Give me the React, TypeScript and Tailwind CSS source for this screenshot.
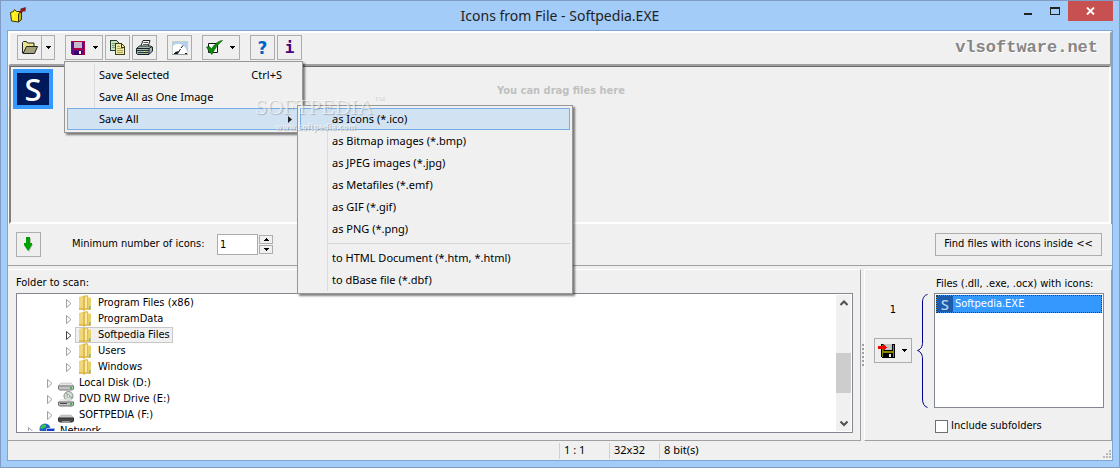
import React, { useState } from "react";

const UI = "font-['Noto_Sans','Open_Sans',sans-serif]";
const TAHOMA = "font-['DejaVu_Sans_Condensed','Noto_Sans',sans-serif]";

type ToolProps = {
  label: string;
  wide?: boolean;
  split?: boolean;
  children: React.ReactNode;
};

function Caret() {
  return (
    <svg width="5" height="3" viewBox="0 0 5 3" shapeRendering="crispEdges">
      <path d="M0 0h5v1H0zM1 1h3v1H1zM2 2h1v1H2z" fill="#000" />
    </svg>
  );
}

function Tool({ label, wide, split, children }: ToolProps) {
  return (
    <button
      type="button"
      aria-label={label}
      className={
        "flex h-[25px] shrink-0 items-center border border-[#adadad] bg-[#efefef] " +
        (wide ? "w-[38px]" : "w-[25px]")
      }
    >
      <span className="flex w-[23px] items-center justify-center">{children}</span>
      {wide && (
        <span
          className={
            "flex h-full flex-1 items-center justify-center " +
            (split ? "border-l border-[#adadad]" : "")
          }
        >
          <Caret />
        </span>
      )}
    </button>
  );
}

function OpenIcon() {
  return (
    <svg width="16" height="13" viewBox="0 0 16 13">
      <path d="M.5 12V1.500l1-1h3l1 1.500h6.500v3" fill="#e9e58a" stroke="#222" />
      <path d="M1 12.500L4.500 5.500h11l-3 7z" fill="#a3a07c" stroke="#222" />
    </svg>
  );
}

function SaveIcon() {
  return (
    <svg width="14" height="14" viewBox="0 0 14 14" shapeRendering="crispEdges">
      <path d="M0 0h14v14H1L0 13z" fill="#b00038" />
      <path d="M1 1h2v7h8V1h2v12H1z" fill="#5c0a96" />
      <path d="M2 8h10v1H2z" fill="#b00038" />
      <path d="M3 1h8v6H3z" fill="#c3bcc8" />
      <path d="M3 10h8v4H3z" fill="#3a0070" />
      <path d="M8 10h2v3H8z" fill="#fff" />
    </svg>
  );
}

function CopyIcon() {
  return (
    <svg width="15" height="15" viewBox="0 0 15 15" shapeRendering="crispEdges">
      <path d="M.5.500h6l2 2v8h-8z" fill="#c9e3c0" stroke="#24402c" />
      <path d="M2 3h3v1H2zM2 5h3v1H2zM2 7h3v1H2z" fill="#7f9e80" />
      <path d="M5.500 3.500h6l3 3v8h-9z" fill="#f2eda6" stroke="#3c3c14" />
      <path d="M11.500 4v3H14" fill="none" stroke="#3c3c14" />
      <path d="M7 6h3v1H7zM7 8h6v1H7zM7 10h6v1H7zM7 12h6v1H7z" fill="#a9a25a" />
    </svg>
  );
}

function PrintIcon() {
  return (
    <svg width="17" height="15" viewBox="0 0 17 15">
      <path d="M4.500 7L7 .5h7L12 7z" fill="#fff" stroke="#222" />
      <path d="M7.500 2.500h4.500M7 4.500h5" stroke="#555" />
      <path d="M.5 8.500L3.500 6h11l2 1v4l-3.500 3.500H2l-1.500-1z" fill="#a9b6b6" stroke="#142020" />
      <path d="M1 8.500h12l3-2M13 8.500v5.500" fill="none" stroke="#142020" />
      <path d="M1 10.500h12M2 12.500h10" stroke="#27383a" />
      <path d="M7 11.500h3" stroke="#e2d820" />
    </svg>
  );
}

function GaugeIcon() {
  return (
    <svg width="16" height="14" viewBox="0 0 16 14">
      <path d="M0 0h16v14H0z" fill="#b4cff0" />
      <path d="M.5 14V.5h15V14" fill="none" stroke="#c4d2c4" />
      <path d="M1 14V5C5 1 13 2 15.500 12v2z" fill="#fff" />
      <path d="M5 13.500L8.500 8M9 7l2-2.500M2 12.500h3M13 12.500h2" stroke="#111" fill="none" />
      <path d="M3 11l4-1-3 4z" fill="#111" />
      <path d="M0 13.500h16" stroke="#8e9a9a" />
    </svg>
  );
}

function CheckIcon() {
  return (
    <svg width="17" height="15" viewBox="0 0 17 15">
      <path d="M2.500 3.500h9v9h-9z" fill="#fff" stroke="#111" />
      <path d="M.5 7l3-.5L5.500 9C8 4.500 12 1 16.500.5 12 4 9 8.500 6 14.500 4 13 2 10 .5 7z" fill="#0a8a0a" stroke="#045c04" strokeWidth=".6" />
    </svg>
  );
}

function AppIcon() {
  return (
    <svg width="16" height="16" viewBox="0 0 16 16">
      <path d="M.5 5.500l3-1 1-2 2 2h5v7.500l-3 3-7-1z" fill="#ffee1c" stroke="#3a3500" />
      <path d="M8.500 7l3-3v8.500l-3 2.500z" fill="#c8b400" stroke="#3a3500" />
      <path d="M3.500 7v5" stroke="#fffbb0" fill="none" />
      <path d="M9 5l2.500-2-1-1L15.500.5l-.5 4-1-1L11 6z" fill="#a01414" stroke="#3c0000" strokeWidth=".5" />
    </svg>
  );
}

function ExportIcon() {
  return (
    <svg width="17" height="15" viewBox="0 0 17 15" shapeRendering="crispEdges">
      <path d="M3 1h14v14H4l-1-1z" fill="#000" />
      <path d="M4 2h1v12H4zM15 2h1v12h-1zM5 8h10v2H5z" fill="#8a8a00" />
      <path d="M6 1h8v6H6z" fill="#c6c6c6" />
      <path d="M6 10h8v5H6z" fill="#000" />
      <path d="M11 11h2v3h-2z" fill="#f0f0f0" />
      <path d="M0 3h5V1h1v1h1v1h1v1h1v1H8v1H7v1H6v1H5V6H0z" fill="#f00000" />
    </svg>
  );
}

function DownArrowIcon() {
  return (
    <svg width="9" height="15" viewBox="0 0 9 15">
      <path d="M4 1h3v6h2L5 15 3 12z" fill="#b8b8b8" />
      <path d="M2 0h4v6h2v2L4 14 0 8V6h2z" fill="#00a000" />
    </svg>
  );
}

function FolderIcon() {
  return (
    <svg width="14" height="16" viewBox="0 0 14 16">
      <path d="M1 2l5-1.500v14L1 15z" fill="#f0d779" />
      <path d="M5 1l4-1 1 1v13l-5 2z" fill="#e2bd4c" />
      <path d="M7 2l2-.5V14l-2 1z" fill="#f9eaa8" />
      <path d="M10 2l3 1v11l-3 1z" fill="#ecd06a" />
      <path d="M1 13h12v2H1z" fill="#d7ad3c" opacity=".6" />
      <path d="M11 11h1.500v3H11z" fill="#55bfe0" />
    </svg>
  );
}

function DriveIcon({ dark }: { dark?: boolean }) {
  return (
    <svg width="16" height="16" viewBox="0 0 16 16">
      <path d="M3 8h10l3 3H0z" fill={dark ? "#c9c9c9" : "#e4e4e4"} stroke="#aaa" strokeWidth=".5" />
      <path d="M.5 11h15v3l-1 1h-13l-1-1z" fill={dark ? "#484848" : "#c4c4c4"} stroke={dark ? "#333" : "#777"} />
      {dark ? <path d="M4 14h8v2H4z" fill="#999" /> : <path d="M12 12h2v2h-2z" fill="#38c038" />}
    </svg>
  );
}

function DvdIcon() {
  return (
    <svg width="16" height="16" viewBox="0 0 16 16">
      <circle cx="10.500" cy="5" r="4.500" fill="#d5dbd5" stroke="#8b8b8b" />
      <path d="M10.500 5L8 1.500M10.500 5l4 2" stroke="#6fae75" />
      <circle cx="10.500" cy="5" r="1.300" fill="#fff" stroke="#888" strokeWidth=".7" />
      <path d="M3 8h10l3 3H0z" fill="#e4e4e4" opacity=".8" />
      <path d="M.5 11h15v3l-1 1h-13l-1-1z" fill="#c4c4c4" stroke="#666" />
      <path d="M2 12.500h7" stroke="#444" />
      <path d="M12 12h2v2h-2z" fill="#38c038" />
    </svg>
  );
}

function NetworkIcon() {
  return (
    <svg width="16" height="16" viewBox="0 0 16 16">
      <circle cx="6" cy="6" r="5.500" fill="#1c62c4" />
      <path d="M3 2c3-2 5 0 4 2L3 6 1 5zM7 6l4-2v4z" fill="#3cc04a" />
      <path d="M7.500 5.500h8v6h-8z" fill="#123ce0" stroke="#9ab4e0" />
      <path d="M4 12h8v2H4z" fill="#789" />
    </svg>
  );
}

function SBadge({ small }: { small?: boolean }) {
  return (
    <span
      className={
        "flex items-center justify-center font-['Noto_Sans',sans-serif] font-medium " +
        (small
          ? "size-4 bg-[#1c5cab] text-[15px] leading-4 text-[#b5d4f5]"
          : "size-8 bg-[#00195a] text-[31px] leading-8 text-white")
      }
    >
      S
    </span>
  );
}

const submenu = [
  "as Icons (*.ico)",
  "as Bitmap images (*.bmp)",
  "as JPEG images (*.jpg)",
  "as Metafiles (*.emf)",
  "as GIF (*.gif)",
  "as PNG (*.png)",
  "-",
  "to HTML Document (*.htm, *.html)",
  "to dBase file (*.dbf)",
];

const menuBox =
  "absolute border border-[#979797] bg-[#f0f0f0] p-0.5 shadow-[2px_2px_2px_rgba(0,0,0,0.5)]";
const activeRow = "bg-[#d1e2f2] outline outline-1 -outline-offset-1 outline-[#78aee5]";

function SaveMenu() {
  return (
    <div role="menu" className={menuBox + " -left-px top-[26px] z-10 w-[239px] text-[11px] " + UI}>
      <div className="absolute inset-y-0.5 left-[29px] w-px bg-[#dcdcdc]" />
      <button type="button" role="menuitem" className="flex h-[22px] w-full items-center justify-between pl-8 pr-[18px]">
        <span>Save Selected</span>
        <span>Ctrl+S</span>
      </button>
      <button type="button" role="menuitem" className="flex h-[22px] w-full items-center pl-8">
        Save All as One Image
      </button>
      <div className="relative">
        <button
          type="button"
          role="menuitem"
          aria-haspopup="menu"
          className={"flex h-[22px] w-full items-center justify-between pl-8 pr-2 " + activeRow}
        >
          <span>Save All</span>
          <svg width="4" height="7" viewBox="0 0 4 7">
            <path d="M0 0l4 3.500L0 7z" fill="#222" />
          </svg>
        </button>
        <div role="menu" className={menuBox + " -top-[3px] left-[230px] w-[276px]"}>
          <div className="absolute inset-y-0.5 left-[29px] w-px bg-[#dcdcdc]" />
          {submenu.map((item, i) =>
            item === "-" ? (
              <div key={i} className="ml-7 flex h-[7px] items-center">
                <div className="h-px w-full bg-[#d7d7d7]" />
              </div>
            ) : (
              <button
                key={i}
                type="button"
                role="menuitem"
                className={"flex h-[22px] w-full items-center pl-8 " + (i === 0 ? activeRow : "")}
              >
                {item}
              </button>
            )
          )}
        </div>
      </div>
    </div>
  );
}

type Node = { name: string; level: number; icon: React.ReactNode; selected?: boolean };

const nodes: Node[] = [
  { name: "Program Files (x86)", level: 2, icon: <FolderIcon /> },
  { name: "ProgramData", level: 2, icon: <FolderIcon /> },
  { name: "Softpedia Files", level: 2, icon: <FolderIcon />, selected: true },
  { name: "Users", level: 2, icon: <FolderIcon /> },
  { name: "Windows", level: 2, icon: <FolderIcon /> },
  { name: "Local Disk (D:)", level: 1, icon: <DriveIcon /> },
  { name: "DVD RW Drive (E:)", level: 1, icon: <DvdIcon /> },
  { name: "SOFTPEDIA (F:)", level: 1, icon: <DriveIcon dark /> },
  { name: "Network", level: 0, icon: <NetworkIcon /> },
];

const indents = ["pl-2", "pl-[27px]", "pl-[46px]"];

function FolderTree() {
  return (
    <div className="flex min-h-0 flex-1 border border-[#828790] bg-white p-px">
      <ul role="tree" aria-labelledby="scan-label" className="min-w-0 flex-1 overflow-hidden">
        {nodes.map((n) => (
          <li
            key={n.name}
            role="treeitem"
            aria-selected={!!n.selected}
            className={"flex h-4 items-center " + indents[n.level]}
          >
            <svg className="ml-0.5 mr-[3px] shrink-0" width="6" height="9" viewBox="0 0 6 9">
              <path d="M.5 .5l4.500 4-4.500 4z" fill="#fff" stroke={n.selected ? "#444" : "#a0a0a0"} />
            </svg>
            <span
              className={
                "flex h-4 items-center gap-[5px] pl-0.5 pr-[3px] " +
                (n.selected ? "bg-[#f0f0f0] outline outline-1 -outline-offset-1 outline-[#c8c8c8]" : "")
              }
            >
              <span className="flex w-4 justify-center">{n.icon}</span>
              <span className="pt-px">{n.name}</span>
            </span>
          </li>
        ))}
      </ul>
      <div className="flex w-[15px] shrink-0 flex-col bg-[#f0f0f0]">
        <button type="button" aria-label="Scroll up" className="flex h-4 items-center justify-center">
          <svg width="8" height="7" viewBox="0 0 8 7">
            <path d="M.5 5L4 1.500 7.500 5" fill="none" stroke="#505050" strokeWidth="2" />
          </svg>
        </button>
        <div className="flex-[42]" />
        <div className="flex-[41] bg-[#cdcdcd]" />
        <div className="flex-[22]" />
        <button type="button" aria-label="Scroll down" className="flex h-4 items-center justify-center">
          <svg width="8" height="7" viewBox="0 0 8 7">
            <path d="M.5 1.500L4 5l3.500-3.500" fill="none" stroke="#505050" strokeWidth="2" />
          </svg>
        </button>
      </div>
    </div>
  );
}

export default function App() {
  const [min, setMin] = useState("1");
  const [subs, setSubs] = useState(false);

  return (
    <div
      className={
        "flex h-screen flex-col border border-[#7f9dc4] bg-[#a4ccf9] px-1.5 pb-1.5 text-[11px] text-black " +
        TAHOMA
      }
    >
      <header className="grid h-[29px] shrink-0 grid-cols-[1fr_auto_1fr]">
        <div className="pl-[3px] pt-1.5">
          <AppIcon />
        </div>
        <h1 className={"text-[14px] leading-[29px] text-[#222] " + UI}>
          Icons from File - Softpedia.EXE
        </h1>
        <div className="flex h-5 justify-end">
          <button type="button" aria-label="Minimize" className="flex w-[27px] items-center justify-center pt-1.5">
            <span className="h-0.5 w-2 bg-[#222]" />
          </button>
          <button type="button" aria-label="Maximize" className="flex w-[27px] items-center justify-center">
            <span className="h-2 w-2.5 border border-t-2 border-[#222]" />
          </button>
          <button type="button" aria-label="Close" className="flex w-[45px] items-center justify-center bg-[#c75050]">
            <svg width="9" height="8" viewBox="0 0 9 8">
              <path d="M1 .5l7 7M8 .5l-7 7" stroke="#fff" strokeWidth="1.800" />
            </svg>
          </button>
        </div>
      </header>

      <main className="flex min-h-0 flex-1 flex-col border border-[#7fa5d2] bg-[#f0f0f0]">
        <div
          role="toolbar"
          className="relative z-10 flex h-[35px] shrink-0 items-start border-2 border-b-[#a0a0a0] border-l-white border-r-[#a0a0a0] border-t-white pl-[7px] pr-3 pt-0.5"
        >
          <div className="flex flex-1 gap-2.5">
            <Tool label="Open" wide split><OpenIcon /></Tool>
            <div className="flex gap-0.5">
              <div className="relative">
                <Tool label="Save" wide><SaveIcon /></Tool>
                <SaveMenu />
                <div
                  aria-hidden="true"
                  className="pointer-events-none absolute left-[190px] top-[57px] z-20 flex flex-col items-center text-white/60 [text-shadow:1px_1px_1px_rgba(0,0,0,0.2)]"
                >
                  <span className="flex font-['Liberation_Serif',serif] text-[22px] leading-[30px]">
                    SOFTPEDIA<span className="text-[7px] leading-3">TM</span>
                  </span>
                  <span className="pr-2 text-[8px] font-bold leading-3">www.softpedia.com</span>
                </div>
              </div>
              <Tool label="Copy"><CopyIcon /></Tool>
              <Tool label="Print"><PrintIcon /></Tool>
            </div>
            <Tool label="Gauge"><GaugeIcon /></Tool>
            <Tool label="Check" wide><CheckIcon /></Tool>
            <div className="flex gap-0.5">
              <Tool label="Help">
                <span className="font-['DejaVu_Sans',sans-serif] text-[17px] font-bold leading-5 text-[#0062c8]">?</span>
              </Tool>
              <Tool label="About">
                <span className="font-['DejaVu_Sans_Mono',monospace] text-[16px] font-bold leading-5 text-[#48007c]">i</span>
              </Tool>
            </div>
          </div>
          <a
            href="#"
            className="font-['Liberation_Mono',monospace] text-[17px] font-bold leading-[26px] text-[#858585] [text-shadow:1px_1px_0_#fff]"
          >
            vlsoftware.net
          </a>
        </div>

        <section className="flex h-[158px] shrink-0 border-x border-l-white border-r-[#a0a0a0]">
          <div className="flex flex-1 border border-b-2 border-l-2 border-r-2 border-b-white border-l-[#808080] border-r-white border-t-[#696969] pl-0.5 pt-0.5">
            <div className="flex size-10 items-center justify-center bg-[#3399ff]">
              <SBadge />
            </div>
            <p className="flex-1 pr-10 pt-3.5 text-center text-[11px] font-bold text-[#c0c0c0]">
              You can drag files here
            </p>
          </div>
        </section>

        <section className="flex h-[42px] shrink-0 items-center border-b border-b-[#a0a0a0] pl-2 pr-2.5">
          <button
            type="button"
            aria-label="Extract"
            className="flex size-[25px] items-center justify-center border border-[#adadad] bg-[#efefef]"
          >
            <DownArrowIcon />
          </button>
          <label htmlFor="min-icons" className="ml-[31px] w-[145px]">
            Minimum number of icons:
          </label>
          <input
            id="min-icons"
            value={min}
            onChange={(e) => setMin(e.target.value)}
            className="h-[21px] w-[41px] border border-[#ababab] bg-white px-0.5"
          />
          <div className="ml-px flex flex-col gap-px">
            <button type="button" aria-label="Increase" className="flex h-[9px] w-3.5 items-center justify-center border border-[#adadad]">
              <span className="rotate-180"><Caret /></span>
            </button>
            <button type="button" aria-label="Decrease" className="flex h-[9px] w-3.5 items-center justify-center border border-[#adadad]">
              <Caret />
            </button>
          </div>
          <button type="button" className="ml-auto h-[23px] w-[167px] border border-[#adadad] bg-[#efefef]">
            Find files with icons inside &lt;&lt;
          </button>
        </section>

        <section className="mt-[3px] flex min-h-0 flex-1">
          <div className="flex min-w-0 flex-1 flex-col border-b border-r border-t border-b-[#a0a0a0] border-r-[#a0a0a0] border-t-white pb-[7px] pl-2 pr-[7px]">
            <span id="scan-label" className="pb-px pt-[3px] leading-[19px]">Folder to scan:</span>
            <FolderTree />
          </div>
          <div className="flex w-[3px] flex-col items-center justify-center gap-0.5">
            {[0, 1, 2, 3, 4, 5].map((i) => (
              <span key={i} className="size-0.5 bg-[#a0a0a0]" />
            ))}
          </div>
          <div className="flex w-[248px] shrink-0 border border-b-[#a0a0a0] border-l-white border-r-[#a0a0a0] border-t-white pb-[7px] pl-[9px] pr-[7px]">
            <div className="flex w-[38px] flex-col items-center pt-8">
              <span className="leading-4">1</span>
              <div className="mt-5">
                <Tool label="Save files" wide><ExportIcon /></Tool>
              </div>
            </div>
            <svg className="ml-[5px] mt-6 shrink-0" width="11" height="114" viewBox="0 0 11 114">
              <path
                d="M10.500 .5C7 1 5.500 5 5.500 8v40c0 4-1 7-5 8.500 4 1.500 5 5 5 8.500v40c0 4 1.500 7.500 5 8.500"
                fill="none"
                stroke="#00008b"
              />
            </svg>
            <div className="ml-1.5 min-w-0 flex-1">
              <p id="files-label" className="pl-0.5 pt-1 leading-[19px]">Files (.dll, .exe, .ocx) with icons:</p>
              <ul
                role="listbox"
                aria-labelledby="files-label"
                className="h-[115px] border border-[#828790] bg-white p-px"
              >
                <li
                  role="option"
                  aria-selected="true"
                  className="flex h-[18px] items-center gap-0.5 border border-dotted border-[#4a3010] bg-[#3399ff] text-white"
                >
                  <SBadge small />
                  <span className="pt-px">Softpedia.EXE</span>
                </li>
              </ul>
              <label className="mt-2.5 flex items-center gap-[3px] pl-px">
                <input
                  type="checkbox"
                  checked={subs}
                  onChange={(e) => setSubs(e.target.checked)}
                  className="size-[13px] appearance-none border border-[#707070] bg-white checked:bg-[#3399ff]"
                />
                Include subfolders
              </label>
            </div>
          </div>
        </section>

        <footer className={"relative flex h-[19px] shrink-0 items-center text-[11px] " + UI}>
          <div className="w-[calc(50%-1px)]" />
          <span className="flex h-4 w-[50px] items-center border-l border-[#d0d0d0] pl-1">1 : 1</span>
          <span className="flex h-4 w-[50px] items-center border-l border-[#d0d0d0] pl-1">32x32</span>
          <span className="flex h-4 flex-1 items-center border-l border-[#d0d0d0] pl-1">8 bit(s)</span>
          <svg className="mb-0.5 mr-px self-end" width="8" height="8" viewBox="0 0 8 8" shapeRendering="crispEdges">
            <path d="M6 0h2v2H6zM3 3h2v2H3zM6 3h2v2H6zM0 6h2v2H0zM3 6h2v2H3zM6 6h2v2H6z" fill="#b8b8b8" />
          </svg>
        </footer>
      </main>
    </div>
  );
}
